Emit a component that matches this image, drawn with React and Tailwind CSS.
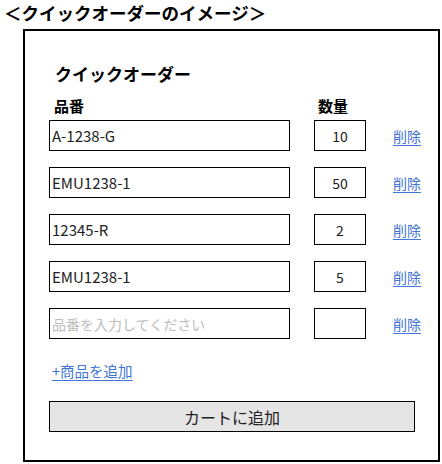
import React, { useState } from "react";

const FONT = { fontFamily: '"Noto Sans CJK JP", "Noto Sans", sans-serif' };

const initialRows = [
  { code: "A-1238-G", qty: "10" },
  { code: "EMU1238-1", qty: "50" },
  { code: "12345-R", qty: "2" },
  { code: "EMU1238-1", qty: "5" },
  { code: "", qty: "" },
];

function OrderRow({ row, onChange, onRemove }) {
  return (
    <div className="flex items-center h-[31px] w-[372px]">
      <input
        type="text"
        className="shrink-0 w-[241px] h-[31px] border border-black px-[2px] text-[15px] text-[#222] placeholder:text-[#bdbdbd] placeholder:text-[14px] outline-none"
        placeholder="品番を入力してください"
        value={row.code}
        onChange={(e) => onChange({ ...row, code: e.target.value })}
      />
      <input
        type="text"
        className="shrink-0 ml-[24px] w-[52px] h-[31px] border border-black text-center text-[14px] text-[#222] outline-none"
        value={row.qty}
        onChange={(e) => onChange({ ...row, qty: e.target.value })}
      />
      <button
        type="button"
        onClick={onRemove}
        className="shrink-0 whitespace-nowrap ml-[27px] text-[14px] text-[#3f74d8] underline underline-offset-[3px] leading-none"
      >
        削除
      </button>
    </div>
  );
}

export default function App() {
  const [rows, setRows] = useState(initialRows);

  const updateRow = (i, next) => {
    setRows(rows.map((r, idx) => (idx === i ? next : r)));
  };

  return (
    <div className="w-[442px] h-[464px] bg-white text-black" style={FONT}>
      <div className="h-[29px] pl-[4px] pt-[1px] text-[17.5px] font-bold leading-[24px] whitespace-nowrap">
        ＜クイックオーダーのイメージ＞
      </div>

      <div className="ml-[23px] w-[417px] h-[433px] border-2 border-black px-[24px]">
        <div className="pt-[31px] pl-[6px] h-[62px] text-[17px] font-bold leading-[24px]">
          クイックオーダー
        </div>
        <div className="flex h-[27px] items-center text-[15px] font-bold">
          <span className="ml-[5px] w-[264px]">品番</span>
          <span>数量</span>
        </div>

        <div className="flex flex-col gap-[16px]">
          {rows.map((row, i) => (
            <OrderRow
              key={i}
              row={row}
              onChange={(next) => updateRow(i, next)}
              onRemove={() => setRows(rows.filter((_, idx) => idx !== i))}
            />
          ))}
        </div>

        <div className="mt-[19px] h-[20px] pl-[3px]">
          <button
            type="button"
            onClick={() => setRows([...rows, { code: "", qty: "" }])}
            className="whitespace-nowrap text-[14.5px] text-[#3f74d8] underline underline-offset-[3px] leading-[20px]"
          >
            +商品を追加
          </button>
        </div>

        <button
          type="button"
          className="mt-[23px] w-[366px] h-[31px] border border-black bg-[#e5e5e5] text-[16px] text-[#222]"
        >
          カートに追加
        </button>
      </div>
    </div>
  );
}
